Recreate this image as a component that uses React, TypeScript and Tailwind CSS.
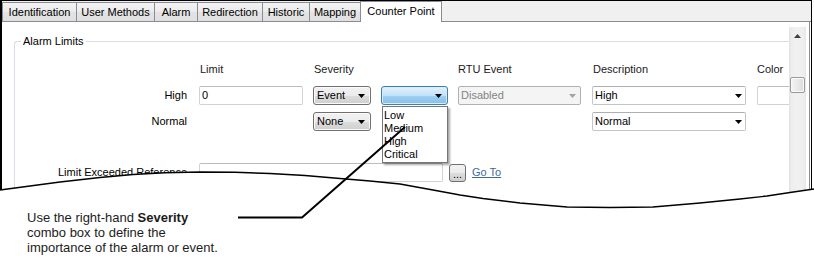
import React from "react";

const ROW = "grid grid-cols-[174px_104px_58px_67px_124px_155px_31px] gap-x-[10px] items-center";

function Arrow({ color = "#000000" }: { color?: string }) {
  return (
    <svg width="7" height="4" viewBox="0 0 7 4" className="shrink-0">
      <polygon points="0,0 7,0 3.5,4" fill={color} />
    </svg>
  );
}

function ButtonCombo({ text }: { text: string }) {
  return (
    <div className="flex h-[19px] w-[58px] items-center justify-between rounded-[3px] border border-[#707070] bg-[linear-gradient(#f2f2f2,#ebebeb_50%,#dddddd_50%,#cfcfcf)] pl-[3px] pr-[5px] shadow-[inset_0_0_0_1px_#fbfbfb]">
      <span>{text}</span>
      <Arrow />
    </div>
  );
}

function WhiteCombo({ text }: { text: string }) {
  return (
    <div className="flex h-[19px] w-[154px] items-center justify-between rounded-[2px] border border-[#c2c6cc] border-t-[#acb0b6] bg-white pl-[2px] pr-[3px]">
      <span>{text}</span>
      <Arrow />
    </div>
  );
}

const tabs = [
  { label: "Identification", w: "w-[74px]" },
  { label: "User Methods", w: "w-[78px]" },
  { label: "Alarm", w: "w-[43px]" },
  { label: "Redirection", w: "w-[65px]" },
  { label: "Historic", w: "w-[47px]" },
  { label: "Mapping", w: "w-[51px]" },
];

const wave: [number, number][] = [
  [0, 190], [30, 186], [60, 182], [100, 177.5], [133, 174.5], [165, 172.8], [200, 172],
  [235, 172.3], [270, 173.5], [305, 175.5], [340, 178.5], [370, 181], [400, 184],
  [433, 190], [460, 195], [483, 198.5], [520, 203], [567, 207], [610, 207.5], [653, 207],
  [700, 203], [740, 199], [767, 196], [790, 192.5], [814, 189],
];

export default function App() {
  const wavePts = wave.map(([x, y]) => `${x},${y}`).join(" ");
  return (
    <div className="relative h-[270px] w-[814px] overflow-hidden bg-white font-['Liberation_Sans',Arial,sans-serif] text-[11px] leading-[13px] text-black">
      {/* Screenshot frame */}
      <div className="flex h-[210px] w-[812px] flex-col border-l-2 border-r border-t border-black">
        {/* Tab strip */}
        <div className="flex h-[21px] shrink-0 items-end bg-[#f0f0f0]">
          {tabs.map((t) => (
            <div
              key={t.label}
              className={`${t.w} flex h-[20px] items-center justify-center border-b border-l border-t border-[#898c95] bg-[linear-gradient(#f3f3f3,#ebebeb_50%,#e3e3e3_50%,#e0e0e0)] pt-[1px]`}
            >
              {t.label}
            </div>
          ))}
          <div className="flex h-[21px] w-[82px] items-center justify-center border-l border-r border-t border-[#898c95] bg-white pb-[1px]">
            Counter Point
          </div>
          <div className="h-full flex-1 border-b border-[#898c95]" />
        </div>

        {/* Content */}
        <div className="mr-[1px] flex flex-1 border-r border-[#898c95] bg-white">
          <div className="flex-1 overflow-hidden">
            <fieldset className="ml-[12px] mt-[13px] h-[200px] rounded-tl-[3px] border-l border-t border-[#d5dfe5]">
              <legend className="ml-[6px] px-[2px]">Alarm Limits</legend>

              {/* headers */}
              <div className={ROW + " mt-[15px] h-[13px] text-[#1a1a1a]"}>
                <div />
                <div className="pl-[1px]">Limit</div>
                <div className="pl-[1px]">Severity</div>
                <div />
                <div>RTU Event</div>
                <div className="pl-[1px]">Description</div>
                <div>Color</div>
              </div>

              {/* High row */}
              <div className={ROW + " mt-[10px] h-[19px]"}>
                <div className="pr-[2px] text-right">High</div>
                <div className="flex h-[19px] items-center rounded-[2px] border border-[#cfd2d6] border-t-[#b9bcc1] bg-white pl-[2px]">
                  0
                </div>
                <ButtonCombo text="Event" />
                <div className="relative">
                  <div className="flex h-[19px] w-[67px] items-center justify-end rounded-[3px] border border-[#3c7fb1] bg-[linear-gradient(#e3f1fc,#c3e1f8_50%,#a2d0f2_50%,#86bfea)] pr-[5px] shadow-[inset_0_0_0_1px_#d9ecfb]">
                    <Arrow />
                  </div>
                  <div className="absolute left-[1px] top-[20px] flex w-[66px] flex-col border border-[#767676] bg-white pb-[1px] pl-[1px] pt-[2px] shadow-[2px_2px_2px_rgba(0,0,0,0.35)]">
                    <div className="h-[13px]">Low</div>
                    <div className="h-[13px]">Medium</div>
                    <div className="h-[13px]">High</div>
                    <div className="h-[13px]">Critical</div>
                  </div>
                </div>
                <div className="flex h-[19px] w-[123px] items-center justify-between rounded-[2px] border border-[#adb2b5] bg-[#f4f4f4] pl-[2px] pr-[4px] text-[#838383]">
                  <span>Disabled</span>
                  <Arrow color="#a3a3a3" />
                </div>
                <WhiteCombo text="High" />
                <div className="h-[19px] w-[40px] rounded-l-[2px] border-b border-l border-t border-[#cfd2d6] border-t-[#b9bcc1] bg-white" />
              </div>

              {/* Normal row */}
              <div className={ROW + " mt-[7px] h-[19px]"}>
                <div className="pr-[2px] text-right">Normal</div>
                <div />
                <ButtonCombo text="None" />
                <div />
                <div />
                <WhiteCombo text="Normal" />
                <div />
              </div>

              {/* Limit exceeded row */}
              <div className={ROW + " mt-[32px] h-[19px]"}>
                <div className="whitespace-nowrap pr-[2px] text-right">Limit Exceeded Reference</div>
                <div className="col-span-4 flex items-center">
                  <div className="h-[19px] w-[244px] rounded-[2px] border border-[#cfd2d6] border-t-[#b9bcc1] bg-white" />
                  <div className="ml-[6px] flex h-[18px] w-[17px] items-end justify-center rounded-[3px] border border-[#707070] bg-[linear-gradient(#f2f2f2,#ebebeb_50%,#dddddd_50%,#cfcfcf)] pb-[2px] leading-[9px]">
                    ...
                  </div>
                  <span className="ml-[6px] text-[#3b6aa0] underline">Go To</span>
                </div>
              </div>
            </fieldset>
          </div>

          {/* Scrollbar */}
          <div className="mt-[5px] flex w-[17px] shrink-0 flex-col bg-[linear-gradient(90deg,#e2e2e2,#eeeeee_15%,#f1f1f1_50%,#eeeeee_85%,#e6e6e6)]">
            <div className="flex h-[17px] items-center justify-center">
              <svg width="7" height="4" viewBox="0 0 7 4">
                <polygon points="0,4 7,4 3.5,0" fill="#404040" />
              </svg>
            </div>
            <div className="h-[33px]" />
            <div className="mx-[1px] h-[16px] rounded-[2px] border border-[#9a9a9a] bg-[linear-gradient(90deg,#f4f4f4,#e9e9e9_50%,#dcdcdc)] shadow-[inset_0_0_0_1px_#fafafa]" />
          </div>
          <div className="w-[3px] shrink-0" />
        </div>
      </div>

      {/* Torn-edge overlay and callout line */}
      <svg className="pointer-events-none absolute left-0 top-0" width="814" height="270" viewBox="0 0 814 270">
        <polygon points={`${wavePts} 814,270 0,270`} fill="#ffffff" />
        <polyline points={wavePts} fill="none" stroke="#000000" strokeWidth="1.4" />
        <polyline points="238,217.5 302,217.5 405,127" fill="none" stroke="#000000" strokeWidth="2" />
      </svg>

      {/* Callout text */}
      <div className="relative z-10 pl-[27px] text-[13px] leading-[15px] text-[#1c1c1c]">
        <p>
          Use the right-hand <b>Severity</b>
        </p>
        <p>combo box to define the</p>
        <p>importance of the alarm or event.</p>
      </div>
    </div>
  );
}
